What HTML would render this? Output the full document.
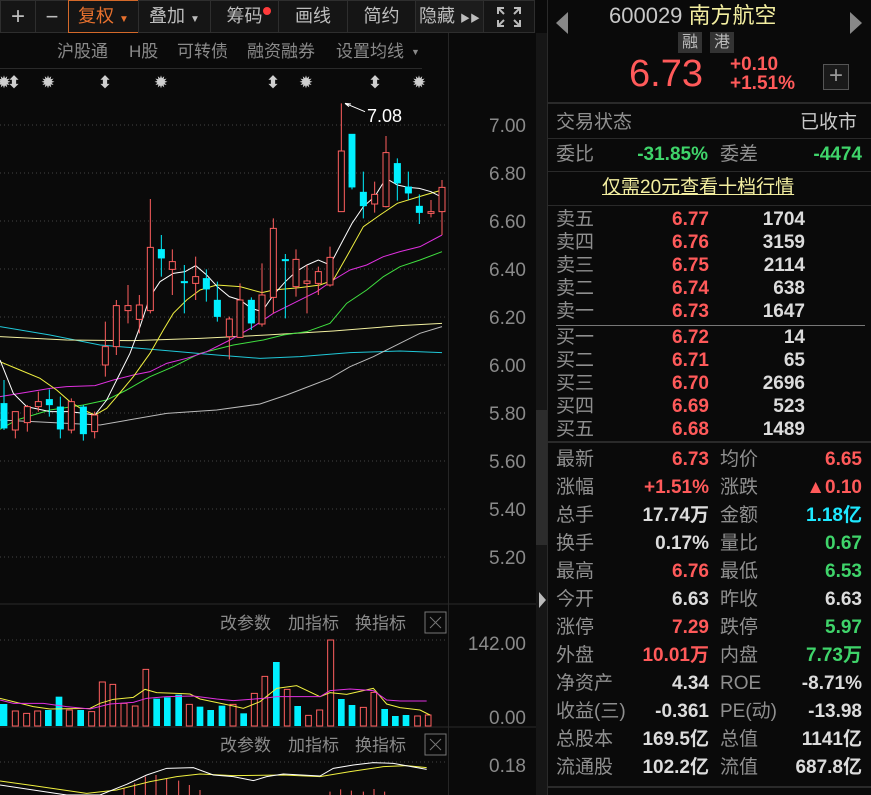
<!DOCTYPE html>
<html><head><meta charset="utf-8"><style>
*{margin:0;padding:0;box-sizing:border-box}
body{width:871px;height:795px;background:#0a0a0a;overflow:hidden;position:relative;font-family:"Liberation Sans","Noto Sans CJK SC",sans-serif;color:#9a9a9a}
.a{position:absolute;white-space:nowrap}
.btn{position:absolute;top:0;height:33px;background:#151515;border:1px solid #2e2e2e;color:#bdbdbd;font-size:18px;line-height:31px;text-align:center}
.lb{position:absolute;color:#8f8f8f;font-size:19px;line-height:22px}
.v{position:absolute;font-size:19px;font-weight:bold;line-height:22px;text-align:right}
.r{color:#ff5a5a}.g{color:#3fd46a}.w{color:#dcdcdc}.c{color:#1ee8ff}
.hl{position:absolute;left:548px;width:323px;height:2px;background:#2a2a2a}
.tr{position:absolute;top:41px;font-size:17px;color:#8a8a8a;line-height:22px;white-space:nowrap}
</style></head><body>
<!-- toolbar -->
<div class="btn" style="left:0;width:36px;font-size:24px">+</div>
<div class="btn" style="left:35px;width:34px;font-size:22px">−</div>
<div class="btn" style="left:68px;width:71px;border-color:#d4692a;color:#e8712e">复权 <span style="font-size:10px">▼</span></div>
<div class="btn" style="left:138px;width:73px">叠加 <span style="font-size:10px">▼</span></div>
<div class="btn" style="left:210px;width:69px">筹码<span style="position:absolute;top:6px;width:8px;height:8px;border-radius:4px;background:#ff3b3b"></span></div>
<div class="btn" style="left:278px;width:70px">画线</div>
<div class="btn" style="left:347px;width:69px">简约</div>
<div class="btn" style="left:415px;width:69px;background:#1c1c1c">隐藏 <span style="font-size:10px">▶▶</span></div>
<div class="btn" style="left:483px;width:52px"><svg width="26" height="22" viewBox="0 0 26 22" style="margin-top:5px" fill="none" stroke="#bbb" stroke-width="2"><path d="M2 8V2h6M2 2l6 6M24 8V2h-6M24 2l-6 6M2 14v6h6M2 20l6-6M24 14v6h-6M24 20l-6-6"/></svg></div>
<div class="tr" style="left:57px">沪股通</div>
<div class="tr" style="left:129px">H股</div>
<div class="tr" style="left:177px">可转债</div>
<div class="tr" style="left:247px">融资融券</div>
<div class="tr" style="left:336px">设置均线</div>
<div class="tr" style="left:411px;font-size:9px">▼</div>
<div class="a" style="left:0;top:68px;width:422px;height:1px;background:#2a2a2a"></div>
<!-- axis / divider -->
<div class="a" style="left:448px;top:33px;width:1px;height:762px;background:#262626"></div>
<div class="a" style="left:536px;top:33px;width:11px;height:762px;background:#161616"></div>
<div class="a" style="left:536px;top:410px;width:11px;height:135px;background:#2c2c2c"></div>
<div class="a" style="left:539px;top:592px;width:0;height:0;border-left:7px solid #bbb;border-top:8px solid transparent;border-bottom:8px solid transparent"></div>
<div class="a" style="left:547px;top:0;width:1px;height:795px;background:#2a2a2a"></div>
<svg class="a" style="left:0;top:0" width="536" height="795">
<g stroke="#444" stroke-dasharray="1 3" stroke-width="1">
<line x1="0" x2="448" y1="125" y2="125"/><line x1="0" x2="448" y1="173" y2="173"/><line x1="0" x2="448" y1="221" y2="221"/><line x1="0" x2="448" y1="269" y2="269"/><line x1="0" x2="448" y1="317" y2="317"/><line x1="0" x2="448" y1="365" y2="365"/><line x1="0" x2="448" y1="413" y2="413"/><line x1="0" x2="448" y1="461" y2="461"/><line x1="0" x2="448" y1="509" y2="509"/><line x1="0" x2="448" y1="557" y2="557"/><line x1="0" x2="448" y1="640" y2="640"/><line x1="0" x2="448" y1="762" y2="762"/>
</g>
<line x1="0" x2="536" y1="604" y2="604" stroke="#2a2a2a"/>
<line x1="0" x2="536" y1="727" y2="727" stroke="#2a2a2a"/>
<g fill="#cfcfcf" font-size="17" font-weight="bold" text-anchor="middle" font-family="DejaVu Sans">
<text x="4" y="88">✹</text><text x="48" y="88">✹</text><text x="161" y="88">✹</text><text x="306" y="88">✹</text><text x="419" y="88">✹</text>
<text x="14" y="88">⬍</text><text x="105" y="88">⬍</text><text x="273" y="88">⬍</text><text x="375" y="88">⬍</text>
</g>
<g fill="#8a8a8a" font-size="19" font-family="Liberation Sans" text-anchor="end">
<text x="526" y="132">7.00</text><text x="526" y="180">6.80</text><text x="526" y="228">6.60</text><text x="526" y="276">6.40</text><text x="526" y="324">6.20</text><text x="526" y="372">6.00</text><text x="526" y="420">5.80</text><text x="526" y="468">5.60</text><text x="526" y="516">5.40</text><text x="526" y="564">5.20</text><text x="526" y="650">142.00</text><text x="526" y="724">0.00</text><text x="526" y="772">0.18</text>
</g>
<g transform="translate(0,100) scale(0.33333)" fill="none" stroke-width="1">
<polyline stroke="#20c8d8" points="0,680 150,705 300,735 500,752 650,765 780,775 900,770 1050,758 1200,753 1326,758" vector-effect="non-scaling-stroke"/>
<polyline stroke="#f2f0a0" points="0,710 200,720 400,722 600,715 800,705 1000,693 1200,677 1326,670" vector-effect="non-scaling-stroke"/>
<polyline stroke="#bbbbbb" points="0,960 100,965 300,975 500,940 650,930 780,912 860,885 990,835 1050,800 1120,770 1200,730 1260,700 1326,680" vector-effect="non-scaling-stroke"/>
<polyline stroke="#40e040" points="0,988 50,960 150,930 250,915 320,900 380,870 450,830 520,800 600,760 700,735 790,720 850,705 920,695 990,670 1040,610 1100,570 1150,530 1200,500 1260,480 1326,455" vector-effect="non-scaling-stroke"/>
<polyline stroke="#e030e0" points="0,890 60,880 150,865 200,860 285,857 340,840 400,825 450,815 500,790 560,775 620,755 690,720 760,680 820,640 880,610 950,575 1000,540 1050,510 1100,495 1150,470 1200,455 1260,440 1326,405" vector-effect="non-scaling-stroke"/>
<polyline stroke="#f0f040" points="0,785 60,810 120,835 170,870 210,905 250,930 285,945 320,925 350,890 400,830 450,760 490,690 520,640 560,600 600,570 650,555 720,560 786,578 820,570 900,563 960,555 1000,540 1040,470 1090,380 1140,345 1192,310 1258,290 1326,270" vector-effect="non-scaling-stroke"/>
<polyline stroke="#ffffff" points="0,780 40,880 80,920 150,935 210,935 250,940 285,945 320,900 350,840 390,760 420,680 450,590 480,545 520,520 555,515 587,497 620,525 652,560 688,590 720,600 754,625 786,635 820,585 856,545 888,515 921,495 955,480 990,495 1024,430 1056,370 1090,320 1124,290 1158,235 1192,255 1225,262 1258,265 1293,275 1326,292" vector-effect="non-scaling-stroke"/>
<g stroke="#ff5f5f" fill="#0a0a0a">
<path vector-effect="non-scaling-stroke" d="M46 935V1015M82 915V995M115 875V935M214 895V1000M284 935V1015M316 665V830M349 600V765M384 555V670M418 585V700M451 297V640M517 448V585M587 470V600M688 650V778M720 550V712M786 490V680M820 355V640M888 448V590M921 495V640M955 500V585M990 440V560M1024 10V335M1124 245V338M1158 108V322M1293 300V352M1326 240V405"/>
<rect vector-effect="non-scaling-stroke" x="37" y="935" width="18" height="55"/>
<rect vector-effect="non-scaling-stroke" x="73" y="920" width="18" height="48"/>
<rect vector-effect="non-scaling-stroke" x="106" y="905" width="18" height="15"/>
<rect vector-effect="non-scaling-stroke" x="205" y="905" width="18" height="85"/>
<rect vector-effect="non-scaling-stroke" x="275" y="945" width="18" height="50"/>
<rect vector-effect="non-scaling-stroke" x="307" y="740" width="18" height="55"/>
<rect vector-effect="non-scaling-stroke" x="340" y="617" width="18" height="123"/>
<rect vector-effect="non-scaling-stroke" x="375" y="617" width="18" height="15"/>
<rect vector-effect="non-scaling-stroke" x="409" y="615" width="18" height="43"/>
<rect vector-effect="non-scaling-stroke" x="442" y="442" width="18" height="190"/>
<rect vector-effect="non-scaling-stroke" x="508" y="485" width="18" height="23"/>
<rect vector-effect="non-scaling-stroke" x="578" y="530" width="18" height="20"/>
<rect vector-effect="non-scaling-stroke" x="679" y="657" width="18" height="53"/>
<rect vector-effect="non-scaling-stroke" x="711" y="600" width="18" height="112"/>
<rect vector-effect="non-scaling-stroke" x="777" y="585" width="18" height="87"/>
<rect vector-effect="non-scaling-stroke" x="811" y="385" width="18" height="207"/>
<rect vector-effect="non-scaling-stroke" x="879" y="478" width="18" height="82"/>
<rect vector-effect="non-scaling-stroke" x="912" y="543" width="18" height="7"/>
<rect vector-effect="non-scaling-stroke" x="946" y="515" width="18" height="35"/>
<rect vector-effect="non-scaling-stroke" x="981" y="472" width="18" height="83"/>
<rect vector-effect="non-scaling-stroke" x="1015" y="153" width="18" height="182"/>
<rect vector-effect="non-scaling-stroke" x="1115" y="283" width="18" height="29"/>
<rect vector-effect="non-scaling-stroke" x="1149" y="158" width="18" height="162"/>
<rect vector-effect="non-scaling-stroke" x="1284" y="335" width="18" height="5"/>
<rect vector-effect="non-scaling-stroke" x="1317" y="262" width="18" height="73"/>
</g>
<g stroke="#00f0ff" fill="#00f0ff">
<path vector-effect="non-scaling-stroke" d="M12 840V990M148 868V950M181 890V1015M250 915V1022M484 405V530M553 495V640M619 508V605M652 545V665M754 592V690M856 462V655M1056 102V268M1090 215V355M1192 175V302M1225 215V300M1258 283V372"/>
<rect x="2" y="910" width="20" height="75"/><rect x="138" y="898" width="20" height="17"/><rect x="171" y="920" width="20" height="68"/><rect x="240" y="920" width="20" height="82"/><rect x="474" y="448" width="20" height="27"/><rect x="543" y="544" width="20" height="5"/><rect x="609" y="535" width="20" height="33"/><rect x="642" y="600" width="20" height="50"/><rect x="744" y="600" width="20" height="70"/><rect x="846" y="478" width="20" height="5"/><rect x="1046" y="102" width="20" height="160"/><rect x="1080" y="276" width="20" height="42"/><rect x="1182" y="190" width="20" height="60"/><rect x="1215" y="260" width="20" height="20"/><rect x="1248" y="318" width="20" height="20"/>
</g>
<path vector-effect="non-scaling-stroke" stroke="#fff" d="M1035 10L1095 35M1035 10l18 2M1035 10l12 10"/>
</g>
<text x="367" y="122" fill="#fff" font-size="18" font-family="Liberation Sans">7.08</text>
<g transform="translate(0,600) scale(0.33333)">
<g fill="#00f0ff"><rect x="0" y="312" width="22" height="66"/><rect x="135" y="330" width="20" height="48"/><rect x="167" y="290" width="20" height="88"/><rect x="232" y="330" width="20" height="48"/><rect x="460" y="296" width="20" height="82"/><rect x="492" y="292" width="20" height="86"/><rect x="526" y="284" width="20" height="94"/><rect x="590" y="320" width="20" height="58"/><rect x="622" y="330" width="20" height="48"/><rect x="656" y="317" width="20" height="61"/><rect x="721" y="340" width="20" height="38"/><rect x="819" y="186" width="20" height="192"/><rect x="883" y="318" width="20" height="60"/><rect x="1014" y="297" width="20" height="81"/><rect x="1046" y="315" width="20" height="63"/><rect x="1144" y="327" width="20" height="51"/><rect x="1176" y="348" width="20" height="30"/><rect x="1208" y="345" width="20" height="33"/></g>
<g fill="none" stroke="#ff5f5f">
<rect vector-effect="non-scaling-stroke" x="37" y="333" width="18" height="45"/><rect vector-effect="non-scaling-stroke" x="71" y="340" width="18" height="38"/><rect vector-effect="non-scaling-stroke" x="104" y="333" width="18" height="45"/><rect vector-effect="non-scaling-stroke" x="199" y="330" width="18" height="48"/><rect vector-effect="non-scaling-stroke" x="266" y="335" width="18" height="43"/><rect vector-effect="non-scaling-stroke" x="298" y="246" width="18" height="132"/><rect vector-effect="non-scaling-stroke" x="330" y="253" width="17" height="125"/><rect vector-effect="non-scaling-stroke" x="363" y="310" width="18" height="68"/><rect vector-effect="non-scaling-stroke" x="397" y="318" width="17" height="60"/><rect vector-effect="non-scaling-stroke" x="429" y="208" width="17" height="170"/><rect vector-effect="non-scaling-stroke" x="559" y="313" width="18" height="65"/><rect vector-effect="non-scaling-stroke" x="690" y="313" width="18" height="65"/><rect vector-effect="non-scaling-stroke" x="754" y="280" width="18" height="98"/><rect vector-effect="non-scaling-stroke" x="786" y="229" width="17" height="149"/><rect vector-effect="non-scaling-stroke" x="853" y="268" width="17" height="110"/><rect vector-effect="non-scaling-stroke" x="917" y="346" width="17" height="32"/><rect vector-effect="non-scaling-stroke" x="950" y="330" width="18" height="48"/><rect vector-effect="non-scaling-stroke" x="983" y="120" width="18" height="258"/><rect vector-effect="non-scaling-stroke" x="1081" y="322" width="18" height="56"/><rect vector-effect="non-scaling-stroke" x="1113" y="277" width="17" height="101"/><rect vector-effect="non-scaling-stroke" x="1244" y="348" width="17" height="30"/><rect vector-effect="non-scaling-stroke" x="1276" y="345" width="17" height="33"/>
</g>
<polyline vector-effect="non-scaling-stroke" fill="none" stroke="#f0f040" points="0,295 40,305 100,320 150,327 270,325 300,310 340,298 400,292 435,268 470,278 530,280 570,282 600,297 700,318 730,325 780,305 830,265 890,257 960,290 990,278 1040,283 1120,265 1160,312 1200,323 1260,330 1290,345"/>
<polyline vector-effect="non-scaling-stroke" fill="none" stroke="#e030e0" points="0,300 40,310 130,310 200,320 270,327 330,312 400,307 440,295 500,290 580,288 650,297 700,302 790,295 830,290 900,290 960,290 990,272 1050,267 1120,272 1160,300 1200,303 1280,303"/>
<g stroke="#ff5f5f"><path vector-effect="non-scaling-stroke" d="M372 565V585M404 550V585M436 530V585M468 525V585M500 535V585M536 542V585M568 555V585M600 570V585M990 575V585M1022 568V585M1054 572V585M1090 575V585M1122 567V585M1154 575V585"/></g>
<polyline vector-effect="non-scaling-stroke" fill="none" stroke="#f0f040" points="0,543 100,557 260,580 350,570 450,545 530,530 600,522 700,527 850,525 960,530 1050,515 1150,500 1220,497 1280,503"/>
<polyline vector-effect="non-scaling-stroke" fill="none" stroke="#fff" points="0,555 100,570 200,585 300,585 380,553 440,525 500,505 580,503 640,525 700,530 760,542 800,530 850,522 960,528 1000,505 1060,495 1120,488 1180,490 1280,508"/>
</g>
<g fill="#8a8a8a" font-size="17" font-family="Liberation Sans,Noto Sans CJK SC,sans-serif">
<text x="220" y="629">改参数</text><text x="288" y="629">加指标</text><text x="355" y="629">换指标</text>
<text x="220" y="751">改参数</text><text x="288" y="751">加指标</text><text x="355" y="751">换指标</text>
</g>
<g fill="none" stroke="#777"><rect x="425" y="612" width="21" height="21"/><path d="M430 617l11 11M441 617l-11 11"/><rect x="425" y="734" width="21" height="21"/><path d="M430 739l11 11M441 739l-11 11"/></g>
</svg>
<!-- right panel -->
<div class="a" style="left:556px;top:12px;width:0;height:0;border-right:12px solid #888;border-top:11px solid transparent;border-bottom:11px solid transparent"></div>
<div class="a" style="left:850px;top:12px;width:0;height:0;border-left:12px solid #888;border-top:11px solid transparent;border-bottom:11px solid transparent"></div>
<div class="a" style="left:609px;top:3px;font-size:22px;line-height:26px"><span style="color:#c8c8c8">600029</span> <span style="color:#f3eea0">南方航空</span></div>
<div class="a" style="left:678px;top:32px;width:24px;height:21px;background:#333;color:#bbb;font-size:16px;text-align:center;line-height:21px">融</div>
<div class="a" style="left:710px;top:32px;width:24px;height:21px;background:#333;color:#bbb;font-size:16px;text-align:center;line-height:21px">港</div>
<div class="a r" style="left:629px;top:53px;font-size:38px;line-height:42px">6.73</div>
<div class="a r" style="left:730px;top:55px;font-size:19px;font-weight:bold;line-height:19px">+0.10<br>+1.51%</div>
<div class="a" style="left:823px;top:64px;width:26px;height:26px;border:1px solid #555;background:#1a1a1a;color:#999;font-size:24px;line-height:22px;text-align:center">+</div>
<div class="hl" style="top:102px"></div>
<div class="lb" style="left:556px;top:112px">交易状态</div>
<div class="lb" style="left:800px;top:112px;color:#c8c8c8">已收市</div>
<div class="hl" style="top:138px;height:1px"></div>
<div class="lb" style="left:556px;top:144px">委比</div>
<div class="v g" style="left:600px;top:144px;width:108px">-31.85%</div>
<div class="lb" style="left:720px;top:144px">委差</div>
<div class="v g" style="left:760px;top:144px;width:102px">-4474</div>
<div class="hl" style="top:171px;height:1px"></div>
<div class="a" style="left:602px;top:176px;font-size:19px;color:#f3eea0;text-decoration:underline;line-height:24px">仅需20元查看十档行情</div>
<div class="hl" style="top:205px;height:1px"></div>
<div id="ob"></div>
<div class="a" style="left:556px;top:325px;width:309px;height:1px;background:#777"></div>
<div class="hl" style="top:441px;height:2px"></div>
<div class="hl" style="top:786px;height:2px"></div>
<script>
var ob=[["卖五","6.77","1704"],["卖四","6.76","3159"],["卖三","6.75","2114"],["卖二","6.74","638"],["卖一","6.73","1647"],["买一","6.72","14"],["买二","6.71","65"],["买三","6.70","2696"],["买四","6.69","523"],["买五","6.68","1489"]];
var h="";
ob.forEach(function(r,i){var y=(i<5?209+i*23:327+(i-5)*23);
h+='<div class="lb" style="left:556px;top:'+y+'px">'+r[0]+'</div><div class="v r" style="left:620px;width:89px;top:'+y+'px">'+r[1]+'</div><div class="v w" style="left:720px;width:85px;top:'+y+'px">'+r[2]+'</div>';});
var st=[["最新","6.73","r","均价","6.65","r"],["涨幅","+1.51%","r","涨跌","▲0.10","r"],["总手","17.74万","w","金额","1.18亿","c"],["换手","0.17%","w","量比","0.67","g"],["最高","6.76","r","最低","6.53","g"],["今开","6.63","w","昨收","6.63","w"],["涨停","7.29","r","跌停","5.97","g"],["外盘","10.01万","r","内盘","7.73万","g"],["净资产","4.34","w","ROE","-8.71%","w"],["收益(三)","-0.361","w","PE(动)","-13.98","w"],["总股本","169.5亿","w","总值","1141亿","w"],["流通股","102.2亿","w","流值","687.8亿","w"]];
st.forEach(function(r,i){var y=449+i*28;
h+='<div class="lb" style="left:556px;top:'+y+'px">'+r[0]+'</div><div class="v '+r[2]+'" style="left:600px;width:109px;top:'+y+'px">'+r[1]+'</div><div class="lb" style="left:720px;top:'+y+'px">'+r[3]+'</div><div class="v '+r[5]+'" style="left:760px;width:102px;top:'+y+'px">'+r[4]+'</div>';});
document.getElementById("ob").innerHTML=h;
</script>
</body></html>
